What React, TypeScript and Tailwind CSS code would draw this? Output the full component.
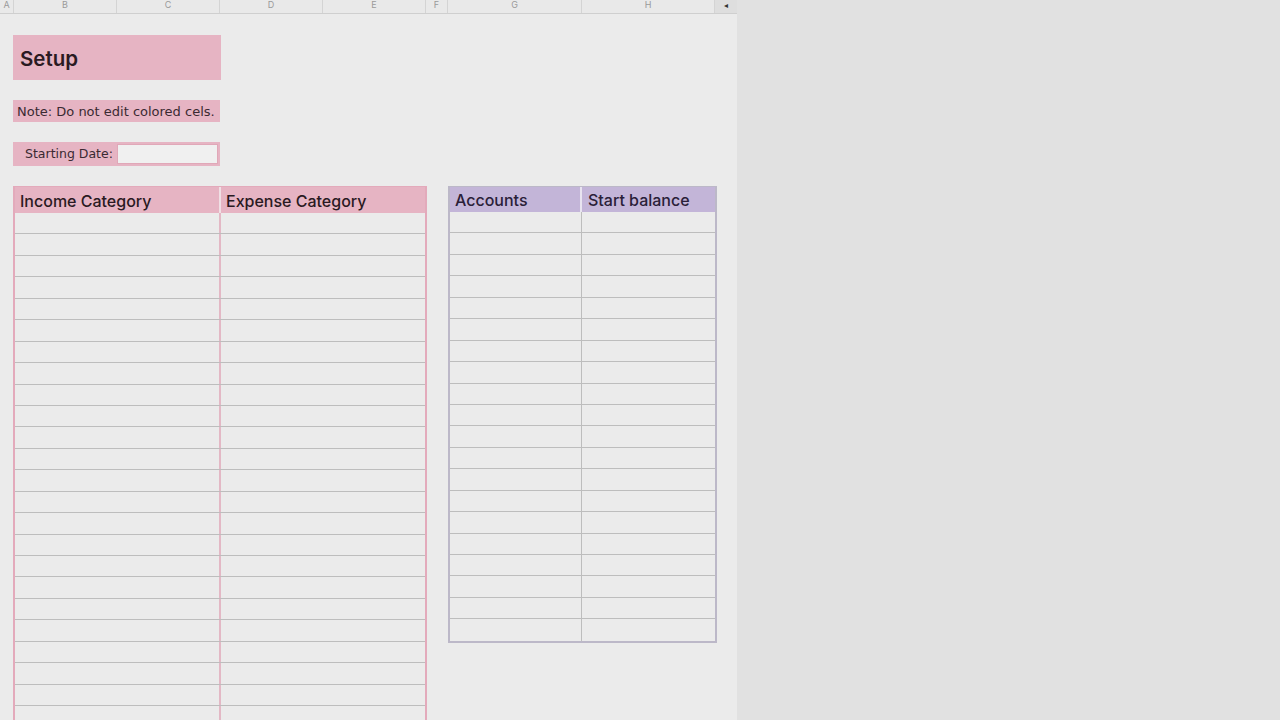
import React from 'react';

/**
 * Setup sheet
 *
 * Spreadsheet-style setup page: title, note, starting date,
 * category tables and accounts table.
 */

const columns = [
  { label: 'A', w: 'w-[14px]' },
  { label: 'B', w: 'w-[103px]' },
  { label: 'C', w: 'w-[103px]' },
  { label: 'D', w: 'w-[103px]' },
  { label: 'E', w: 'w-[103px]' },
  { label: 'F', w: 'w-[22px]' },
  { label: 'G', w: 'w-[134px]' },
  { label: 'H', w: 'w-[133px]' },
];

const sans = { fontFamily: 'Inter, "Liberation Sans", sans-serif' };
const tahoma = { fontFamily: '"DejaVu Sans", "Liberation Sans", sans-serif' };

function ColumnHeaders() {
  return (
    <div className="flex h-[14px] border-b border-[#cfcfcf] bg-[#e9e9e9]">
      {columns.map((c) => (
        <div
          key={c.label}
          className={`${c.w} flex items-start justify-center border-r border-[#d4d4d4] text-[9px] leading-[9px] text-[#9a9a9a]`}
          style={sans}
        >
          {c.label}
        </div>
      ))}
      <div className="flex w-[22px] items-start justify-center bg-[#dedede] text-[8px] leading-[9px] text-[#333]">
        ◂
      </div>
    </div>
  );
}

function Rows({ count, divider, line }: { count: number; divider: string; line: string }) {
  return (
    <div>
      {Array.from({ length: count }).map((_, i) => (
        <div key={i} className={`flex h-[21.45px] border-b ${line}`}>
          <div className={`flex-1 border-r-2 ${divider}`} />
          <div className="flex-1" />
        </div>
      ))}
    </div>
  );
}

export default function App() {
  return (
    <div className="flex h-[720px] w-[1280px] overflow-hidden bg-[#e1e1e1]">
      <div className="h-full w-[737px] overflow-hidden bg-[#ebebeb]">
        <ColumnHeaders />

        <div className="pl-[13px] pt-[21px]">
          <div className="flex h-[45px] w-[208px] items-center bg-[#e6b4c3] pl-[7px] pt-[3px]">
            <span className="text-[20.5px] font-semibold text-[#2a1a22]" style={sans}>
              Setup
            </span>
          </div>

          <div className="mt-[20px] flex h-[22px] w-[207px] items-center bg-[#e6b4c3] pl-[4px] pt-[1px]">
            <span className="text-[13px] text-[#3a2a32]" style={tahoma}>
              Note: Do not edit colored cels.
            </span>
          </div>

          <div className="mt-[20px] flex h-[24px] w-[207px] items-center bg-[#e6b4c3]">
            <span className="w-[104px] pl-[12px] pt-[1px] text-[12.5px] text-[#3a2a32]" style={tahoma}>
              Starting Date:
            </span>
            <div className="h-[20px] w-[101px] border border-[#e0a8b8] bg-[#f0f0f0]" />
          </div>

          <div className="mt-[20px] flex items-start gap-[21px]">
            <div className="w-[414px] border-x-2 border-t border-[#e3aabb]">
              <div className="flex h-[26px] bg-[#e6b4c3]">
                <div className="flex flex-1 items-center border-r-2 border-[#f0e0e5] pl-[5px] pt-[1px]">
                  <span className="text-[16px] font-medium text-[#2a1a22]" style={sans}>
                    Income Category
                  </span>
                </div>
                <div className="flex flex-1 items-center pl-[5px] pt-[1px]">
                  <span className="text-[16px] font-medium text-[#2a1a22]" style={sans}>
                    Expense Category
                  </span>
                </div>
              </div>
              <Rows count={24} divider="border-[#e3b8c5]" line="border-[#bdbdbd]" />
            </div>

            <div className="w-[269px] border-2 border-t border-[#bcb8c8]">
              <div className="flex h-[25px] bg-[#c3b5d8]">
                <div className="flex w-[132px] items-center border-r-2 border-[#e8e4f0] pl-[5px] pt-[1px]">
                  <span className="text-[16px] font-medium text-[#2a2038]" style={sans}>
                    Accounts
                  </span>
                </div>
                <div className="flex flex-1 items-center pl-[6px] pt-[1px]">
                  <span className="text-[16px] font-medium text-[#2a2038]" style={sans}>
                    Start balance
                  </span>
                </div>
              </div>
              <div>
                {Array.from({ length: 20 }).map((_, i) => (
                  <div
                    key={i}
                    className={`flex h-[21.45px] ${i < 19 ? 'border-b border-[#bdbdbd]' : ''}`}
                  >
                    <div className="w-[132px] border-r border-[#bdbdbd]" />
                    <div className="flex-1" />
                  </div>
                ))}
              </div>
            </div>
          </div>
        </div>
      </div>
      <div className="flex-1" />
    </div>
  );
}
